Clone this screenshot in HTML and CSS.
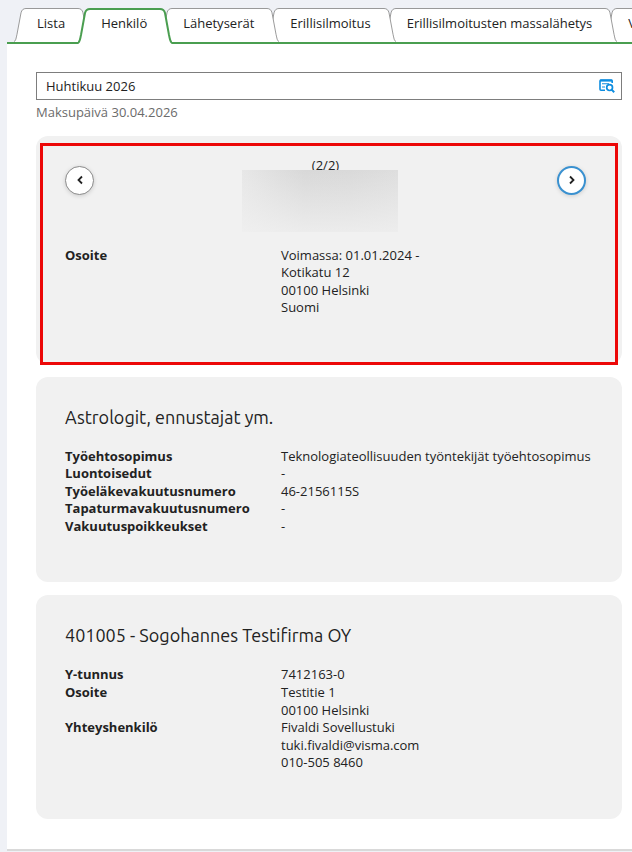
FILE: index.html
```html
<!DOCTYPE html>
<html lang="fi">
<head>
<meta charset="UTF-8">
<meta name="viewport" content="width=device-width, initial-scale=1.0">
<title>Henkilö</title>
<link rel="stylesheet" href="styles.css">
</head>
<body>
<svg class="sprite" aria-hidden="true">
    <symbol id="edge-left" viewBox="0 0 12 35" preserveAspectRatio="none">
        <path class="edge-fill" d="M0 35 C2 34 2 32 3 28 L7 5 Q8 1 12 1 V35 Z"/>
        <path class="edge-line" d="M0 34.5 C2 34 2 31 3 27 L7 5 Q8 0.5 12 0.5"/>
    </symbol>
    <symbol id="edge-right" viewBox="0 0 12 35" preserveAspectRatio="none">
        <path class="edge-fill" d="M12 35 C10 34 10 32 9 28 L5 5 Q4 1 0 1 V35 Z"/>
        <path class="edge-line" d="M12 34.5 C10 34 10 31 9 27 L5 5 Q4 0.5 0 0.5"/>
    </symbol>
    <symbol id="active-left" viewBox="0 0 12 36">
        <path class="edge-fill" d="M0 36 C2 34 2 32 3 28 L7 5 Q8 1 12 1 V36 Z"/>
        <path class="edge-line" d="M-1 35 C2 35 2 31 3 27 L7 5 Q8 1 12 1"/>
    </symbol>
    <symbol id="active-right" viewBox="0 0 12 36">
        <path class="edge-fill" d="M12 36 C10 34 10 32 9 28 L5 5 Q4 1 0 1 V36 Z"/>
        <path class="edge-line" d="M13 35 C10 35 10 31 9 27 L5 5 Q4 1 0 1"/>
    </symbol>
</svg>

<nav class="tabs">
    <a class="tab" href="#lista"><svg class="edge"><use href="#edge-left"/></svg><span>Lista</span><svg class="edge"><use href="#edge-right"/></svg></a>
    <a class="tab active" href="#henkilo"><svg class="edge"><use href="#active-left"/></svg><span>Henkilö</span><svg class="edge"><use href="#active-right"/></svg></a>
    <a class="tab" href="#lahetyserat"><svg class="edge"><use href="#edge-left"/></svg><span>Lähetyserät</span><svg class="edge"><use href="#edge-right"/></svg></a>
    <a class="tab" href="#erillisilmoitus"><svg class="edge"><use href="#edge-left"/></svg><span>Erillisilmoitus</span><svg class="edge"><use href="#edge-right"/></svg></a>
    <a class="tab" href="#massalahetys"><svg class="edge"><use href="#edge-left"/></svg><span>Erillisilmoitusten massalähetys</span><svg class="edge"><use href="#edge-right"/></svg></a>
    <a class="tab" href="#v"><svg class="edge"><use href="#edge-left"/></svg><span>V</span><svg class="edge"><use href="#edge-right"/></svg></a>
</nav>

<main class="panel" id="henkilo">
    <div class="period">
        <input type="text" id="period" value="Huhtikuu 2026">
        <button type="button" class="period-search" aria-label="Hae palkkakausi">
            <svg viewBox="0 0 16 14" width="16" height="14">
                <path d="M6 11.2 H2 Q1 11.2 1 10.2 V2 Q1 1 2 1 H12.2 Q13.2 1 13.2 2 V4" fill="none" stroke="#0d8de0" stroke-width="1.6"/>
                <path d="M1 1.6 H13.2" stroke="#0d8de0" stroke-width="2"/>
                <path d="M3 4.8 H10 M3 8 H6" stroke="#0d8de0" stroke-width="1.1"/>
                <circle cx="10.6" cy="8.6" r="2.9" fill="#fff" stroke="#0d8de0" stroke-width="1.7"/>
                <path d="M12.6 10.6 L15.2 13.2" stroke="#0d8de0" stroke-width="2"/>
            </svg>
        </button>
    </div>
    <label class="pay-date" for="period">Maksupäivä 30.04.2026</label>

    <section class="card highlighted">
        <div class="pager">
            <button type="button" class="round" aria-label="Edellinen">
                <svg viewBox="0 0 10 10" width="10" height="10"><path d="M7 1.5 L3.5 5 L7 8.5"/></svg>
            </button>
            <div class="person">
                <span>(2/2)</span>
                <div class="masked"></div>
            </div>
            <button type="button" class="round next" aria-label="Seuraava">
                <svg viewBox="0 0 10 10" width="10" height="10"><path d="M3 1.5 L6.5 5 L3 8.5"/></svg>
            </button>
        </div>
        <dl class="details">
            <dt>Osoite</dt>
            <dd>Voimassa: 01.01.2024 -<br>Kotikatu 12<br>00100 Helsinki<br>Suomi</dd>
        </dl>
    </section>

    <section class="card">
        <h2>Astrologit, ennustajat ym.</h2>
        <dl class="details">
            <dt>Työehtosopimus</dt>
            <dd>Teknologiateollisuuden työntekijät työehtosopimus</dd>
            <dt>Luontoisedut</dt>
            <dd>-</dd>
            <dt>Työeläkevakuutusnumero</dt>
            <dd>46-2156115S</dd>
            <dt>Tapaturmavakuutusnumero</dt>
            <dd>-</dd>
            <dt>Vakuutuspoikkeukset</dt>
            <dd>-</dd>
        </dl>
    </section>

    <section class="card">
        <h2>401005 - Sogohannes Testifirma OY</h2>
        <dl class="details">
            <dt>Y-tunnus</dt>
            <dd>7412163-0</dd>
            <dt>Osoite</dt>
            <dd>Testitie 1<br>00100 Helsinki</dd>
            <dt>Yhteyshenkilö</dt>
            <dd>Fivaldi Sovellustuki<br>tuki.fivaldi@visma.com<br>010-505 8460</dd>
        </dl>
    </section>
</main>
</body>
</html>
```

FILE: styles.css
```css
* {
    box-sizing: border-box;
}
body {
    margin: 0;
    padding: 8px 0 0 7px;
    background-color: #eff1f6;
    color: #222;
    font-family: "Open Sans", "Noto Sans", sans-serif;
    font-size: 13px;
    line-height: 1.35;
    overflow-x: hidden;
}
.sprite {
    display: none;
}

/* tabs */
.tabs {
    display: flex;
    height: 36px;
    padding-left: 7px;
    overflow: hidden;
    background: linear-gradient(#4a9e50, #4a9e50) bottom / 100% 2px no-repeat;
}
.tab {
    display: flex;
    flex: none;
    position: relative;
    height: 34px;
    margin-right: -12px;
    color: #222;
    text-decoration: none;
    stroke: #999;
}
.tab:nth-child(1) { z-index: 6; }
.tab:nth-child(2) { z-index: 5; }
.tab:nth-child(3) { z-index: 4; }
.tab:nth-child(4) { z-index: 3; }
.tab:nth-child(5) { z-index: 2; }
.tab span {
    padding: 6px 13px 0 11px;
    border-top: 1px solid #999;
    background-color: #fff;
}
.edge {
    width: 12px;
    height: 34px;
}
.edge-fill {
    fill: #fff;
    stroke: none;
}
.edge-line {
    fill: none;
}
.tab.active {
    z-index: 7;
    height: 36px;
    stroke: #4a9e50;
    stroke-width: 2px;
}
.tab.active .edge {
    height: 36px;
}
.tab.active span {
    padding-top: 5px;
    border-top: 2px solid #4a9e50;
}

/* content */
.panel {
    padding: 28px 10px 30px 29px;
    background-color: #fff;
    border-bottom: 2px solid #d9d9d9;
}
.period {
    display: flex;
    align-items: center;
    height: 28px;
    border: 1px solid #7d7d7d;
    background-color: #fff;
}
.period input {
    flex: 1;
    min-width: 0;
    padding: 2px 9px 0;
    border: none;
    outline: none;
    background: none;
    color: #222;
    font: inherit;
}
.period-search {
    display: flex;
    padding: 0 6px;
    border: none;
    background: none;
    cursor: pointer;
}
.pay-date {
    display: block;
    margin: 4px 0 14px;
    color: #6b6b6b;
}
.card {
    position: relative;
    margin-bottom: 13px;
    padding: 27px 29px 47px;
    border-radius: 12px;
    background-color: #f1f1f1;
}
.card:last-child {
    margin-bottom: 0;
}
.card.highlighted {
    padding-top: 21px;
}
.card.highlighted::after {
    content: "";
    position: absolute;
    inset: 7px 4px -1px;
    border: 3px solid #ec0808;
    pointer-events: none;
}
.card h2 {
    margin: 0 0 18px;
    font-family: Ubuntu, "Noto Sans", sans-serif;
    font-size: 18px;
    font-weight: normal;
    line-height: 26px;
}
.details {
    display: grid;
    grid-template-columns: 216px 1fr;
    margin: 0;
}
.details dt {
    font-weight: bold;
}
.details dd {
    margin: 0;
}
.pager {
    display: flex;
    justify-content: space-between;
    align-items: flex-start;
    height: 90px;
    margin-right: 7px;
}
.round {
    display: flex;
    align-items: center;
    justify-content: center;
    width: 29px;
    height: 29px;
    margin-top: 9px;
    padding: 0;
    border: 1px solid #8a8a8a;
    border-radius: 50%;
    background-color: #fff;
    box-shadow: 0 1px 4px rgba(0, 0, 0, 0.15);
    cursor: pointer;
}
.round.next {
    border: 2px solid #3a91d0;
}
.round svg {
    fill: none;
    stroke: #222;
    stroke-width: 1.8px;
}
.person {
    position: relative;
    text-align: center;
}
.masked {
    position: absolute;
    top: 13px;
    right: -59px;
    width: 156px;
    height: 62px;
    background:
        linear-gradient(to bottom, rgba(241, 241, 241, 0), rgba(241, 241, 241, 0.8)),
        linear-gradient(to right, #e7e7e7, #d8d8d8 40%, #d9d9d9 70%, #dedede);
}
```
